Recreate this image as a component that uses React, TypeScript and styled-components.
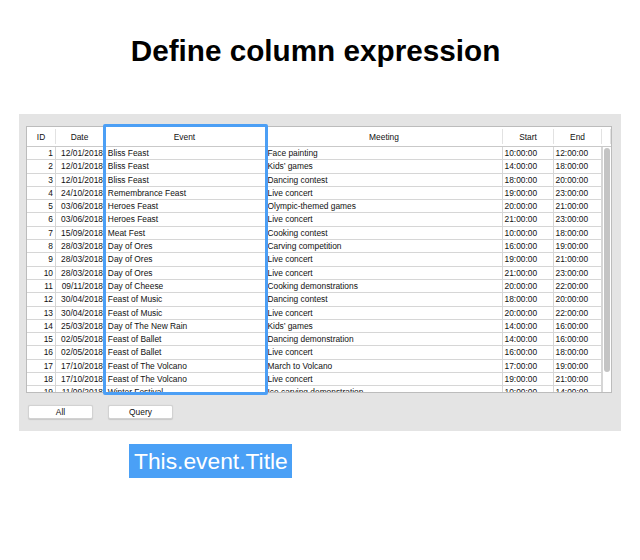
import React from "react";
import styled, { createGlobalStyle } from "styled-components";

const Global = createGlobalStyle`
  html, body { margin: 0; padding: 0; background: #ffffff; }
  body { font-family: "Liberation Sans", Arial, sans-serif; width: 640px; height: 560px; overflow: hidden; }
`;

const Page = styled.div`
  display: flex;
  flex-direction: column;
  width: 640px;
`;

const Title = styled.h1`
  margin: 0;
  padding: 34px 9px 0 0;
  font-family: "Liberation Sans", Arial, sans-serif;
  font-weight: 700;
  font-size: 29.7px;
  line-height: 34px;
  text-align: center;
  color: #000;
`;

const Panel = styled.div`
  margin: 46px 0 0 19px;
  width: 602px;
  box-sizing: border-box;
  padding: 12px 9px 12px 7px;
  background: #e4e4e4;
  display: flex;
  flex-direction: column;
  gap: 12px;
`;

const TableWrap = styled.div`
  position: relative;
  width: 586px;
  height: 267px;
  box-sizing: border-box;
  border: 1px solid #bcbcbc;
  background: #ffffff;
  display: flex;
  flex-direction: column;
`;

const COLS = "29px 48px 162px 237px 51px 48px";

const HeaderRow = styled.div`
  display: grid;
  grid-template-columns: ${COLS} 1fr;
  height: 20px;
  box-sizing: border-box;
  border-bottom: 1px solid #c9c9c9;
  flex-shrink: 0;
`;

const HeadCell = styled.div`
  display: flex;
  align-items: center;
  justify-content: center;
  font-size: 8.4px;
  color: #111;
  border-right: 1px solid #e2e2e2;
  margin: 2px 0;
`;

const Body = styled.div`
  flex: 1;
  display: flex;
  overflow: hidden;
`;

const Rows = styled.div`
  width: 575px;
  display: flex;
  flex-direction: column;
  overflow: hidden;
`;

const Row = styled.div`
  display: grid;
  grid-template-columns: ${COLS};
  height: 13.3px;
  flex-shrink: 0;
  box-sizing: border-box;
  border-bottom: 1px solid #d6d6d6;
`;

const Cell = styled.div<{ $align?: "left" | "right"; $pr?: number }>`
  font-size: 8.4px;
  line-height: 12.3px;
  color: #111;
  white-space: nowrap;
  overflow: hidden;
  text-align: ${(p) => p.$align || "left"};
  padding: 0 ${(p) => p.$pr ?? 0}px 0 ${(p) => (p.$align === "right" ? 0 : 1.5)}px;
  border-right: 1px solid #d6d6d6;
`;

const ScrollTrack = styled.div`
  flex: 1;
  border-left: 1px solid #d6d6d6;
  display: flex;
  justify-content: center;
  padding-top: 1px;
`;

const Thumb = styled.div`
  width: 6px;
  height: 224px;
  border-radius: 3px;
  background: #c4c4c4;
`;

const Highlight = styled.div`
  position: absolute;
  left: 76px;
  top: -3px;
  width: 165px;
  height: 271px;
  box-sizing: border-box;
  border: 3px solid #4c9ff5;
  border-radius: 2px;
  pointer-events: none;
`;

const ButtonBar = styled.div`
  display: flex;
  gap: 15px;
  padding-left: 2px;
`;

const Button = styled.button`
  width: 65px;
  height: 14px;
  padding: 0;
  border: 1px solid #d2d2d2;
  border-radius: 2px;
  background: #ffffff;
  box-shadow: 0 0.5px 1px rgba(0, 0, 0, 0.12);
  font-family: "Liberation Sans", Arial, sans-serif;
  font-size: 8.4px;
  line-height: 12px;
  color: #111;
`;

const Label = styled.div`
  margin: 13px 0 0 129px;
  width: 163px;
  height: 34px;
  box-sizing: border-box;
  padding: 1px 0 0 5px;
  background: #4aa0f6;
  color: #ffffff;
  font-family: "Liberation Sans", Arial, sans-serif;
  font-size: 22.8px;
  line-height: 33px;
  white-space: nowrap;
`;

type Ev = [number, string, string, string, string, string];

const data: Ev[] = [
  [1, "12/01/2018", "Bliss Feast", "Face painting", "10:00:00", "12:00:00"],
  [2, "12/01/2018", "Bliss Feast", "Kids’ games", "14:00:00", "18:00:00"],
  [3, "12/01/2018", "Bliss Feast", "Dancing contest", "18:00:00", "20:00:00"],
  [4, "24/10/2018", "Remembrance Feast", "Live concert", "19:00:00", "23:00:00"],
  [5, "03/06/2018", "Heroes Feast", "Olympic-themed games", "20:00:00", "21:00:00"],
  [6, "03/06/2018", "Heroes Feast", "Live concert", "21:00:00", "23:00:00"],
  [7, "15/09/2018", "Meat Fest", "Cooking contest", "10:00:00", "18:00:00"],
  [8, "28/03/2018", "Day of Ores", "Carving competition", "16:00:00", "19:00:00"],
  [9, "28/03/2018", "Day of Ores", "Live concert", "19:00:00", "21:00:00"],
  [10, "28/03/2018", "Day of Ores", "Live concert", "21:00:00", "23:00:00"],
  [11, "09/11/2018", "Day of Cheese", "Cooking demonstrations", "20:00:00", "22:00:00"],
  [12, "30/04/2018", "Feast of Music", "Dancing contest", "18:00:00", "20:00:00"],
  [13, "30/04/2018", "Feast of Music", "Live concert", "20:00:00", "22:00:00"],
  [14, "25/03/2018", "Day of The New Rain", "Kids’ games", "14:00:00", "16:00:00"],
  [15, "02/05/2018", "Feast of Ballet", "Dancing demonstration", "14:00:00", "16:00:00"],
  [16, "02/05/2018", "Feast of Ballet", "Live concert", "16:00:00", "18:00:00"],
  [17, "17/10/2018", "Feast of The Volcano", "March to Volcano", "17:00:00", "19:00:00"],
  [18, "17/10/2018", "Feast of The Volcano", "Live concert", "19:00:00", "21:00:00"],
  [19, "11/09/2018", "Winter Festival", "Ice carving demonstration", "10:00:00", "14:00:00"],
];

const headers = ["ID", "Date", "Event", "Meeting", "Start", "End", ""];

export default function App() {
  return (
    <Page>
      <Global />
      <Title>Define column expression</Title>
      <Panel>
        <TableWrap>
          <HeaderRow>
            {headers.map((h, i) => (
              <HeadCell key={i}>{h}</HeadCell>
            ))}
          </HeaderRow>
          <Body>
            <Rows>
              {data.map((r) => (
                <Row key={r[0]}>
                  <Cell $align="right" $pr={2}>{r[0]}</Cell>
                  <Cell $align="right" $pr={0}>{r[1]}</Cell>
                  <Cell>{"\u00a0" + r[2]}</Cell>
                  <Cell>{r[3]}</Cell>
                  <Cell>{r[4]}</Cell>
                  <Cell>{r[5]}</Cell>
                </Row>
              ))}
            </Rows>
            <ScrollTrack>
              <Thumb />
            </ScrollTrack>
          </Body>
          <Highlight />
        </TableWrap>
        <ButtonBar>
          <Button>All</Button>
          <Button>Query</Button>
        </ButtonBar>
      </Panel>
      <Label>This.event.Title</Label>
    </Page>
  );
}
